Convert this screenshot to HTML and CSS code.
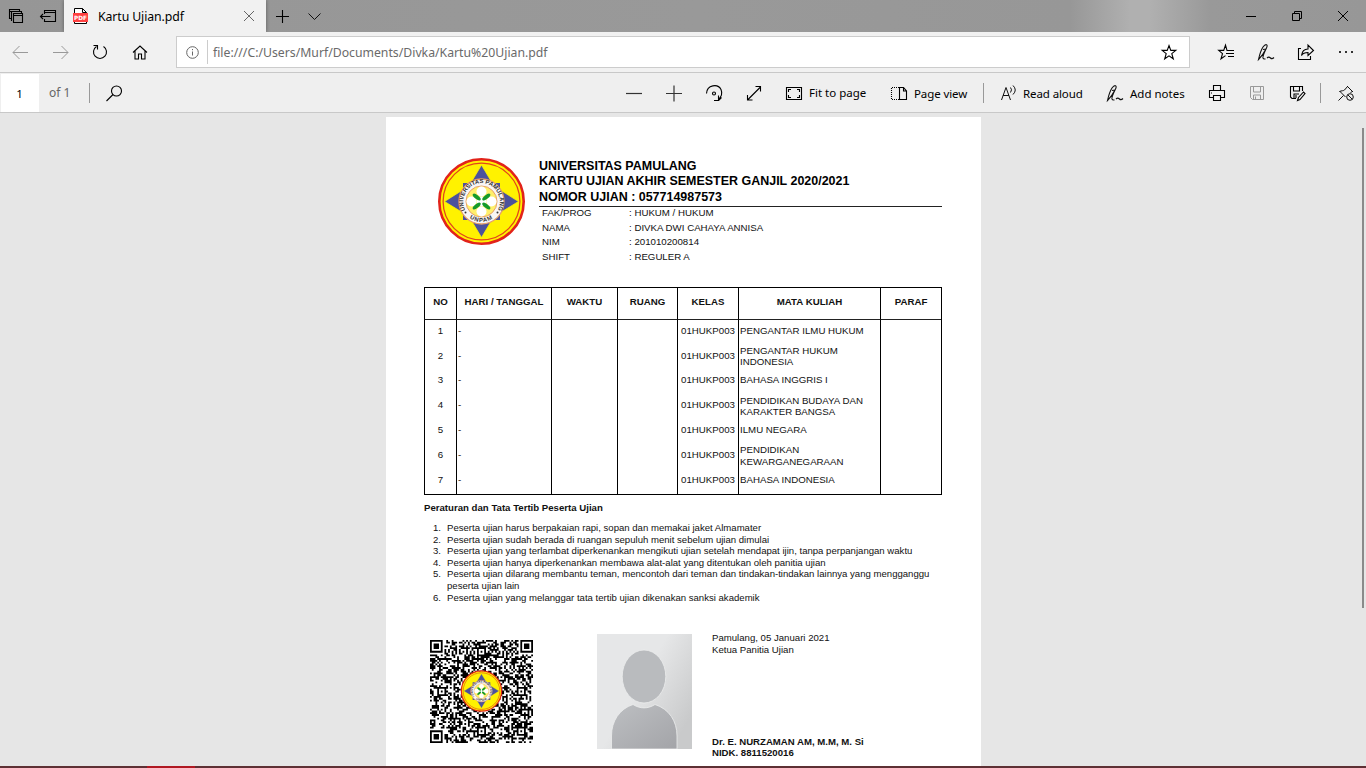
FILE: index.html
```html
<!DOCTYPE html>
<html lang="id">
<head>
<meta charset="utf-8">
<title>Kartu Ujian.pdf</title>
<link rel="stylesheet" href="styles.css">
</head>
<body>
<div class="window">
  <header class="titlebar">
    <svg class="icon strong" viewBox="0 0 24 24"><path d="M7.500 14.500h-2v-9h10v2M5 7.500h10M8 16.500h-.5v-9h10v2"/><path d="M9.500 9.500h9v9h-9zM9.500 11.500h9"/></svg>
    <svg class="icon icon-aside strong" viewBox="0 0 24 24"><path d="M8.500 10V6.500h11v11h-11V15M8.500 8.500h11M4.500 12.500h10M7 10l-2.500 2.500L7 15"/></svg>
    <div class="tab">
      <svg class="icon" viewBox="0 0 24 24"><path d="M5.500 8V4.500h8l4 4V19.500H5.500z" fill="#fff" stroke="#000"/><path d="M13.500 4.500v4h4" stroke="#000"/><path d="M4 9h15v9H4z" fill="#ff4040" stroke="none"/><text x="5" y="15.600" class="pdf-word" textLength="13">PDF</text></svg>
      <span class="tab-title">Kartu Ujian.pdf</span>
      <svg class="icon gray" viewBox="0 0 24 24"><path d="M7 7l10 10M17 7L7 17"/></svg>
    </div>
    <svg class="icon icon-new strong" viewBox="0 0 24 24"><path d="M12.500 6v13M6 12.500h13"/></svg>
    <svg class="icon icon-more" viewBox="0 0 24 24"><path d="M6.500 9.500l6 6 6-6"/></svg>
    <div class="controls">
      <svg class="icon" viewBox="0 0 24 24"><path d="M7 12.500h10"/></svg>
      <svg class="icon" viewBox="0 0 24 24"><path d="M7.500 9.500h7v7h-7zM9.500 9V7.500h7v7H15"/></svg>
      <svg class="icon" viewBox="0 0 24 24"><path d="M7 7l10 10M17 7L7 17"/></svg>
    </div>
  </header>

  <nav class="navbar">
    <span class="btn"><svg class="icon faded" viewBox="0 0 24 24"><path d="M5 12.500h15M11.500 6L5 12.500l6.500 6.500"/></svg></span>
    <span class="btn"><svg class="icon faded" viewBox="0 0 24 24"><path d="M5 12.500h15M13.500 6l6.500 6.500-6.500 6.500"/></svg></span>
    <span class="btn"><svg class="icon strong" viewBox="0 0 24 24"><path d="M8.500 6.500a6.500 6.500 0 1 0 7 0M5.500 5.500h4v4"/></svg></span>
    <span class="btn"><svg class="icon strong" viewBox="0 0 24 24"><path d="M5 12.500l7-6.500 7 6.500M7 11v8h3.500v-5h3v5H17v-8"/></svg></span>
    <div class="address">
      <svg class="icon gray" viewBox="0 0 24 24"><circle cx="12.500" cy="12.500" r="5.800"/><path d="M12.500 11.500v4M12.500 9v1.200"/></svg>
      <span class="address-url">file:///C:/Users/Murf/Documents/Divka/Kartu%20Ujian.pdf</span>
      <svg class="icon strong" viewBox="0 0 24 24"><path d="M12 5.500l1.800 4.900h5l-4 3.200 1.500 5.200-4.300-3-4.300 3 1.500-5.200-4-3.200h5z"/></svg>
    </div>
    <span class="btn"><svg class="icon strong" viewBox="0 0 24 24"><path d="M14 10.500h-1L11.500 5.200l-1.800 5.200H4.700l3.800 3.200-1.500 5.200 4.500-3.200M13 10.500h7M12 13.500h8M14 16.500h6"/></svg></span>
    <span class="btn"><svg class="icon pen" viewBox="0 0 24 24"><use href="#pen"/></svg></span>
    <span class="btn"><svg class="icon strong" viewBox="0 0 24 24"><path d="M7 8.500H4.500v11h12V16M7.500 15.500c.5-4 2.500-6.500 6.500-6.500V5l5.500 5.500-5.500 5v-3c-3 0-5 .5-6.500 3z"/></svg></span>
    <span class="btn"><svg class="icon dots" viewBox="0 0 24 24"><path d="M5 11h2v2H5zM11 11h2v2h-2zM17 11h2v2h-2z"/></svg></span>
  </nav>

  <div class="toolbar">
    <span class="page-box">1</span>
    <span class="page-count">of 1</span>
    <i class="sep"></i>
    <svg class="icon icon-search strong" viewBox="0 0 24 24"><circle cx="14.500" cy="10" r="5"/><path d="M11 13.500L4.500 20"/></svg>
    <div class="tools">
      <svg class="icon zoom" viewBox="0 0 24 24"><path d="M4 12.500h16"/></svg>
      <svg class="icon zoom" viewBox="0 0 24 24"><path d="M4 12.500h16M12 4.500v16"/></svg>
      <svg class="icon strong" viewBox="0 0 24 24"><path d="M4.500 12.500C5 3.500 16 2.500 19 8.500c1.500 3.500.5 7-2.500 10M16.500 14.500v5H12M16.500 19.500l3-3"/><circle cx="12" cy="12.500" r="1.500"/></svg>
      <svg class="icon strong" viewBox="0 0 24 24"><path d="M5.500 19L18.500 6M13.500 5.500h5v5M5.500 14v5h5"/></svg>
      <svg class="icon strong" viewBox="0 0 24 24"><path d="M4.500 6.500h15v12h-15z"/><path d="M6.500 11V8.500h2.500M15 8.500h2.500V11M17.500 14v2.500H15M9 16.500H6.500V14"/></svg>
    </div>
    <span class="label label-fit">Fit to page</span>
    <svg class="icon strong" viewBox="0 0 24 24"><path d="M12 6.500H4.500v12H12" stroke-dasharray="1 1"/><path d="M12.500 6.500h4l3 3.500v8.500h-7zM16.500 6.500V10h3"/></svg>
    <span class="label label-view">Page view</span>
    <i class="sep"></i>
    <svg class="icon icon-read" viewBox="0 0 24 24"><path d="M4.500 19l4.500-12.500L13.500 19M6 14.500h6M13.500 6.500q2 2 0 5M16 4.500q4.500 4.500 0 9"/></svg>
    <span class="label label-read">Read aloud</span>
    <svg class="icon pen" viewBox="0 0 24 24"><g id="pen"><path d="M4.500 19.500C5.500 15 7 10 9 7c2.500-3.500 5.500-3 3.500 1C10.500 12 8 16 4.500 19.500zM9 9.500l3-.5M12.500 8c-2 4-4 8-3.500 10 .5 1.500 1.500 1 2.500 1M13 18c1.500-1.500 2.500-1 3.500 0s2 1 3.500-.5"/></g></svg>
    <span class="label label-notes">Add notes</span>
    <svg class="icon strong" viewBox="0 0 24 24"><path d="M8.500 9.500v-5h7v5M8 16.500H4.500v-7h15v7H16M8.500 14.500h7v5h-7zM6 12h1"/></svg>
    <svg class="icon faded icon-save" viewBox="0 0 24 24"><path d="M5.500 5.500h13v13h-11l-2-2zM8.500 6v5h7V6M8.500 18v-4h7v4M10.500 15.500V18"/></svg>
    <svg class="icon strong icon-saveas" viewBox="0 0 24 24"><path d="M11 17.500H7l-1.500-1.500V5.500h12V10M8.500 6v4h6V6M9 17v-4h5M11 14v3"/><path d="M12.500 19.500l1-3 5-5.500 1.500 1.500-5 6z"/></svg>
    <i class="sep sep-last"></i>
    <svg class="icon icon-pin" viewBox="0 0 24 24"><path d="M4.500 19.500l5-5M5.500 10l6 6M5.500 10.500c2-1 4-.5 5-1.500l3-3.500 5 5-2 1M13 5l6 6"/><circle cx="16" cy="16" r="3.300"/><path d="M14 14l4 4"/></svg>
  </div>

  <main class="viewer">
    <article class="sheet">
      <header class="card-head">
        <svg class="logo" viewBox="0 0 87 87">
          <defs><path id="arc-top" d="M27 51.500a18.300 18.300 0 1 1 33 0"/><path id="arc-bottom" d="M25.200 52.500a20.300 20.300 0 0 0 36.600 0"/></defs>
          <g id="crest">
            <circle cx="43.500" cy="43.500" r="42.200" fill="#fff200" stroke="#e2231a" stroke-width="2.600"/>
            <circle cx="43.500" cy="43.500" r="38.400" fill="none" stroke="#e2461a" stroke-width="1.300"/>
            <path d="M25 25h37v37H25z" fill="#4c529c"/>
            <path d="M43.500 7l12.500 21 24.500 15.500-24.500 15-12.500 21-12.500-21-24.500-15 24.500-15.500z" fill="#4c529c" stroke="#fff200" stroke-width=".8"/>
            <circle cx="43.500" cy="43.500" r="22.500" fill="#f8f5f5" stroke="#e8a06a" stroke-width="1.300"/>
            <circle cx="43.500" cy="43.500" r="15.500" fill="#ffef6a" stroke="#e8a06a"/>
            <g fill="#fff"><circle cx="43.500" cy="33.500" r="5"/><circle cx="43.500" cy="53.500" r="5"/><circle cx="33.500" cy="43.500" r="5"/><circle cx="53.500" cy="43.500" r="5"/><circle cx="43.500" cy="43.500" r="5"/></g>
            <g fill="#149a2c"><ellipse cx="38.700" cy="39" rx="4.800" ry="2" transform="rotate(38 38.700 39)"/><ellipse cx="48.300" cy="39" rx="4.800" ry="2" transform="rotate(-38 48.300 39)"/><ellipse cx="38.700" cy="48" rx="4.800" ry="2" transform="rotate(-38 38.700 48)"/><ellipse cx="48.300" cy="48" rx="4.800" ry="2" transform="rotate(38 48.300 48)"/></g>
            <circle cx="27.500" cy="54.500" r="1" fill="#333"/><circle cx="59.500" cy="54.500" r="1" fill="#333"/>
            <text class="crest-text"><textPath href="#arc-top" startOffset="50%">UNIVERSITAS PAMULANG</textPath></text>
            <text class="crest-text crest-low"><textPath href="#arc-bottom" startOffset="50%">UNPAM</textPath></text>
          </g>
        </svg>
        <div class="identity">
          <h1 class="heading">UNIVERSITAS PAMULANG<br>KARTU UJIAN AKHIR SEMESTER GANJIL 2020/2021<br>NOMOR UJIAN : 057714987573</h1>
          <dl class="info">
            <dt>FAK/PROG</dt><dd>: HUKUM / HUKUM</dd>
            <dt>NAMA</dt><dd>: DIVKA DWI CAHAYA ANNISA</dd>
            <dt>NIM</dt><dd>: 201010200814</dd>
            <dt>SHIFT</dt><dd>: REGULER A</dd>
          </dl>
        </div>
      </header>

      <table class="schedule">
        <colgroup><col class="w-no"><col class="w-day"><col class="w-time"><col class="w-room"><col class="w-class"><col class="w-course"><col class="w-sign"></colgroup>
        <thead><tr><th>NO</th><th>HARI / TANGGAL</th><th>WAKTU</th><th>RUANG</th><th>KELAS</th><th>MATA KULIAH</th><th>PARAF</th></tr></thead>
        <tbody>
          <tr><td>1</td><td>-</td><td></td><td></td><td>01HUKP003</td><td>PENGANTAR ILMU HUKUM</td><td></td></tr>
          <tr><td>2</td><td>-</td><td></td><td></td><td>01HUKP003</td><td>PENGANTAR HUKUM<br>INDONESIA</td><td></td></tr>
          <tr><td>3</td><td>-</td><td></td><td></td><td>01HUKP003</td><td>BAHASA INGGRIS I</td><td></td></tr>
          <tr><td>4</td><td>-</td><td></td><td></td><td>01HUKP003</td><td>PENDIDIKAN BUDAYA DAN<br>KARAKTER BANGSA</td><td></td></tr>
          <tr><td>5</td><td>-</td><td></td><td></td><td>01HUKP003</td><td>ILMU NEGARA</td><td></td></tr>
          <tr><td>6</td><td>-</td><td></td><td></td><td>01HUKP003</td><td>PENDIDIKAN<br>KEWARGANEGARAAN</td><td></td></tr>
          <tr><td>7</td><td>-</td><td></td><td></td><td>01HUKP003</td><td>BAHASA INDONESIA</td><td></td></tr>
        </tbody>
      </table>

      <h2 class="rules-title">Peraturan dan Tata Tertib Peserta Ujian</h2>
      <ol class="rules">
        <li><b>1.</b><span>Peserta ujian harus berpakaian rapi, sopan dan memakai jaket Almamater</span></li>
        <li><b>2.</b><span>Peserta ujian sudah berada di ruangan sepuluh menit sebelum ujian dimulai</span></li>
        <li><b>3.</b><span>Peserta ujian yang terlambat diperkenankan mengikuti ujian setelah mendapat ijin, tanpa perpanjangan waktu</span></li>
        <li><b>4.</b><span>Peserta ujian hanya diperkenankan membawa alat-alat yang ditentukan oleh panitia ujian</span></li>
        <li><b>5.</b><span>Peserta ujian dilarang membantu teman, mencontoh dari teman dan tindakan-tindakan lainnya yang mengganggu<br>peserta ujian lain</span></li>
        <li><b>6.</b><span>Peserta ujian yang melanggar tata tertib ujian dikenakan sanksi akademik</span></li>
      </ol>

      <footer class="card-foot">
        <svg class="qr" viewBox="0 0 57 57"><path id="modules" fill="#000"/><use href="#crest" transform="translate(17 16.800) scale(.264)"/></svg>
        <svg class="photo" viewBox="0 0 95 115">
          <defs>
            <linearGradient id="back" x1="0" y1="0" x2="1" y2=".7"><stop offset=".5" stop-color="#e6e7e8"/><stop offset="1" stop-color="#c9cacb"/></linearGradient>
            <linearGradient id="body" x1="0" y1="0" x2="1" y2="1"><stop offset="0" stop-color="#bdbfc2"/><stop offset="1" stop-color="#a3a4a8"/></linearGradient>
          </defs>
          <path d="M0 0h95v115H0z" fill="url(#back)"/>
          <ellipse cx="47" cy="42.500" rx="21.800" ry="26.500" fill="#b9bbbe" stroke="#eceded" stroke-width=".8"/>
          <path d="M14.500 115v-13c0-15 8-27 21.500-31.500 7 4.500 15 4.500 22 0C72 75 80 87 80 102v13z" fill="url(#body)" stroke="#eceded" stroke-width=".8"/>
        </svg>
        <div class="signature">
          <p>Pamulang, 05 Januari 2021<br>Ketua Panitia Ujian</p>
          <p class="signer">Dr. E. NURZAMAN AM, M.M, M. Si<br>NIDK. 8811520016</p>
        </div>
      </footer>
    </article>
    <i class="scrollbar"></i>
  </main>
  <div class="taskbar"><i class="task-active"></i></div>
</div>
<script src="qr.js"></script>
</body>
</html>
```
FILE: styles.css
```css
* { box-sizing: border-box; }
body { margin: 0; overflow: hidden; background: #e6e6e6; font-family: "Noto Sans", "Open Sans", sans-serif; color: #000; }
.window { width: 1366px; height: 768px; display: flex; flex-direction: column; }

.icon { width: 24px; height: 24px; flex: none; fill: none; stroke: #111; stroke-width: 1; }
.strong { stroke: #000; stroke-width: 1.100; }
.pen { stroke: #111; stroke-width: 1.100; }
.gray { stroke: #666; }
.faded { stroke: #999; }
.zoom { stroke: #333; stroke-width: 1.200; }
.dots { fill: #333; stroke: none; }

.titlebar { height: 32px; flex: none; display: flex; align-items: center; padding: 0 11px 0 4px; background: linear-gradient(90deg, #969696 0, #999 700px, #979797 1070px, #b0b0b0 1130px, #b0b0b0 1150px, #999 1210px, #979797 100%); }
.icon-aside { margin-left: 8px; }
.tab { width: 202px; height: 32px; margin-left: 4px; padding: 0 5px; display: flex; align-items: center; background: #f1f1f1; box-shadow: 0 0 4px rgba(0, 0, 0, .4); clip-path: inset(0 -4px 0 -4px); }
.pdf-word { font: bold 5.800px "DejaVu Sans", sans-serif; fill: #fff; stroke: none; }
.tab-title { flex: 1; margin-left: 5px; font-size: 12.300px; letter-spacing: -.1px; white-space: nowrap; }
.icon-new { margin-left: 4px; }
.icon-more { margin-left: 8px; }
.controls { margin-left: auto; display: flex; gap: 22px; }
.controls .icon { stroke: #000; }

.navbar { height: 41px; flex: none; display: flex; padding-top: 4px; background: #f1f1f1; border-bottom: 1px solid #c8c8c8; }
.btn { width: 40px; height: 32px; display: flex; align-items: center; justify-content: center; }
.address { width: 1014px; height: 32px; margin: 0 16px; padding: 0 8px 0 3px; display: flex; align-items: center; background: #fff; border: 1px solid #ccc; }
.address-url { flex: 1; height: 24px; margin-left: 3px; padding-left: 5px; border-left: 1px solid #ccc; font-size: 12.250px; line-height: 25px; color: #6a6a6a; }

.toolbar { height: 40px; flex: none; display: flex; align-items: center; padding-left: 1px; background: #efefef; border-bottom: 1px solid #c8c8c8; font-size: 11.500px; white-space: nowrap; }
.page-box { width: 38px; height: 38px; padding-right: 1px; background: #fff; text-align: center; line-height: 40px; }
.page-count { width: 50px; padding-left: 10px; font-size: 12px; color: #666; line-height: 42px; }
.sep { width: 1px; height: 20px; background: #999; }
.icon-search { margin-left: 12px; }
.tools { margin-left: 496px; display: flex; gap: 16px; }
.label { line-height: 20px; padding-top: 2px; }
.label-fit { margin-left: 3px; width: 78px; padding-top: 1px; }
.label-view { margin-left: 3px; width: 69px; letter-spacing: -.1px; }
.icon-read { margin-left: 13px; }
.label-read { margin-left: 2px; width: 80px; letter-spacing: -.1px; }
.label-notes { margin-left: 3px; width: 75px; }
.icon-save, .icon-saveas { margin-left: 16px; }
.sep-last { margin-left: 11px; }
.icon-pin { margin-left: 13px; }

.viewer { flex: 1; min-height: 0; display: flex; padding: 4px 2px 0 386px; overflow: hidden; background: #e6e6e6; }
.sheet { width: 595px; height: 649px; padding: 40px 39px 0 38px; background: #fff; font-family: "Liberation Sans", Arial, sans-serif; font-size: 9.700px; color: #111; overflow: hidden; }
.scrollbar { width: 2px; height: 480px; margin: 11px 0 0 auto; background: #8a8a8a; }

.card-head { height: 130px; display: flex; padding-left: 14px; }
.logo { width: 87px; height: 87px; margin-top: 1px; }
.crest-text { font: bold 5.900px "Liberation Sans", sans-serif; fill: #333; text-anchor: middle; }
.crest-low { letter-spacing: .8px; }
.identity { width: 403px; margin-left: 14px; }
.heading { height: 50px; margin: 0; padding-top: 2px; border-bottom: 1px solid #222; font-size: 12.480px; line-height: 15.400px; white-space: nowrap; color: #000; }
.info { margin: -1px 0 0; padding-left: 3px; display: grid; grid-template-columns: 87px 1fr; grid-auto-rows: 14.500px; line-height: 14.500px; }
.info dd { margin: 0; }

.schedule { width: 518px; height: 208px; table-layout: fixed; border-collapse: separate; border-spacing: 0; border: 1px solid #000; border-left: 0; line-height: 11.500px; }
.w-no { width: 32px; } .w-day { width: 95px; } .w-time { width: 66px; } .w-room { width: 60px; } .w-class { width: 61px; } .w-course { width: 142px; } .w-sign { width: 61px; }
.schedule th { height: 32px; padding: 0 0 4px; border-left: 1px solid #000; border-bottom: 1px solid #222; }
.schedule td { height: 24.857px; padding: 0 0 1.850px 1px; border-left: 1px solid #000; white-space: nowrap; vertical-align: middle; }
.schedule td:first-child, .schedule td:nth-child(5) { padding-left: 0; text-align: center; }
.schedule tr:nth-child(odd) td { padding-bottom: 4px; }
.schedule td:nth-child(-n+5) { padding-bottom: 4px; }

.rules-title { margin: 7px 0 0; font-size: 9.650px; line-height: 12px; }
.rules { margin: 8px 0 0; padding: 0 0 0 9px; list-style: none; font-size: 9.580px; line-height: 11.600px; white-space: nowrap; }
.rules li { display: flex; }
.rules b { width: 14px; font-weight: normal; }

.card-foot { display: flex; margin-top: 31px; height: 130px; }
.qr { width: 103px; height: 103px; margin: 6px 0 0 6px; }
.photo { width: 95px; height: 115px; margin-left: 64px; }
.signature { margin-left: 20px; font-size: 9.620px; line-height: 11.600px; white-space: nowrap; }
.signature p { margin: -2px 0 0; }
.signature .signer { margin-top: 80.500px; font-weight: bold; }

.taskbar { height: 2px; flex: none; background: #5e3034; }
.task-active { display: block; width: 48px; height: 2px; margin-left: 147px; background: #b01822; }
```
FILE: qr.js
```js
// Builds the 57 x 57 code as one path of unit squares.
const N = 57;
let seed = 8142021;
const random = () => {
  seed = (seed * 1664525 + 1013904223) >>> 0;
  return seed / 4294967296;
};
const corners = [[3, 3], [N - 4, 3], [3, N - 4]];
const marks = [[28, 6], [6, 28], [50, 28], [28, 50], [50, 50]];
let d = "";
for (let y = 0; y < N; y++) {
  for (let x = 0; x < N; x++) {
    let dark = random() < 0.52;
    if (x === 6 || y === 6) dark = (x + y) % 2 === 0;
    for (const [cx, cy] of marks) {
      const r = Math.max(Math.abs(x - cx), Math.abs(y - cy));
      if (r <= 2) dark = r !== 1;
    }
    for (const [cx, cy] of corners) {
      const r = Math.max(Math.abs(x - cx), Math.abs(y - cy));
      if (r <= 4) dark = r !== 2 && r !== 4;
    }
    if (dark) d += `M${x} ${y}h1v1h-1z`;
  }
}
document.getElementById("modules").setAttribute("d", d);
```
